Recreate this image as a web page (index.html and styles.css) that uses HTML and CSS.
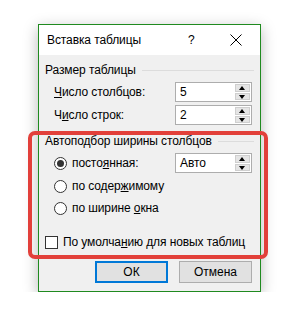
FILE: index.html
```html
<!DOCTYPE html>
<html lang="ru">
<head>
  <meta charset="UTF-8">
  <title>Вставка таблицы</title>
  <link rel="stylesheet" href="styles.css">
</head>
<body>
  <div class="dialog">
    <div class="titlebar">
      <span class="title">Вставка таблицы</span>
      <span class="help">?</span>
      <svg class="close" width="12" height="12" viewBox="0 0 12 12">
        <path d="M0.5 0.5 L11.5 11.5 M11.5 0.5 L0.5 11.5" stroke="#000" stroke-width="1" fill="none"/>
      </svg>
    </div>

    <div class="content">
      <div class="group-title">Размер таблицы</div>

      <div class="row first">
        <span class="label"><u>Ч</u>исло столбцов:</span>
        <div class="spin">
          <span class="value">5</span>
          <div class="arrows"><span class="up"></span><span class="down"></span></div>
        </div>
      </div>
      <div class="row second">
        <span class="label">Ч<u>и</u>сло строк:</span>
        <div class="spin">
          <span class="value">2</span>
          <div class="arrows"><span class="up"></span><span class="down"></span></div>
        </div>
      </div>

      <div class="group-title group2">Автоподбор ширины столбцов</div>

      <div class="row radio-row r1">
        <span class="radio checked"></span>
        <span class="label">посто<u>я</u>нная:</span>
        <div class="spin">
          <span class="value">Авто</span>
          <div class="arrows"><span class="up"></span><span class="down"></span></div>
        </div>
      </div>
      <div class="row radio-row r2">
        <span class="radio"></span>
        <span class="label">по содер<u>ж</u>имому</span>
      </div>
      <div class="row radio-row r3">
        <span class="radio"></span>
        <span class="label">по ширине <u>о</u>кна</span>
      </div>

      <div class="check-row">
        <span class="checkbox"></span>
        <span class="label">По умолча<u>н</u>ию для новых таблиц</span>
      </div>

      <div class="buttons">
        <button class="btn default">ОК</button>
        <button class="btn">Отмена</button>
      </div>
    </div>
  </div>

  <div class="highlight"></div>
</body>
</html>
```

FILE: styles.css
```css
body {
  margin: 0;
  background: #fff;
  font-family: "Liberation Sans", sans-serif;
  font-size: 12px;
  color: #000;
}

.dialog {
  margin: 24px 0 0 38px;
  width: 221px;
  border: 1px solid #1f8a1f;
  background: #f0f0f0;
  box-shadow: 0 4px 14px rgba(0, 0, 0, 0.28);
  white-space: nowrap;
  letter-spacing: -0.1px;
}

.titlebar {
  height: 30px;
  background: #fff;
  display: flex;
  align-items: center;
  padding-left: 8px;
}

.title {
  flex: 1;
  font-size: 12px;
}

.help {
  width: 12px;
  margin-right: 30px;
}

.close {
  margin-right: 18px;
}

.content {
  padding: 0 8px 8px 6px;
}

.group-title {
  display: flex;
  align-items: center;
  height: 16px;
  margin-top: 7px;
  margin-right: -2px;
}

.group-title::after {
  content: "";
  flex: 1;
  height: 1px;
  background: #dcdcdc;
  margin-left: 6px;
}

.group2 {
  margin-top: 8px;
}

.row {
  display: flex;
  align-items: center;
  height: 20px;
  padding-left: 9px;
}

.row.first { margin-top: 4px; }
.row.second { margin-top: 3px; }

.row .label {
  flex: 1;
}

.radio-row {
  height: 22px;
}

.radio-row.r1 { margin-top: 3px; }
.radio-row.r2 { margin-top: 1px; }

.spin {
  width: 75px;
  height: 18px;
  border: 1px solid #adadad;
  background: #fff;
  display: flex;
  align-items: center;
}

.value {
  flex: 1;
  padding-left: 4px;
}

.arrows {
  width: 15px;
  height: 16px;
  margin-right: 1px;
  display: flex;
  flex-direction: column;
  gap: 1px;
  background: #fff;
}

.up, .down {
  flex: 1;
  background: #e5e5e5;
  border: 1px solid #cfcfcf;
  position: relative;
}

.up::after, .down::after {
  content: "";
  position: absolute;
  left: 3px;
  border-left: 3.5px solid transparent;
  border-right: 3.5px solid transparent;
}

.up::after {
  top: 1px;
  border-bottom: 4px solid #000;
}

.down::after {
  top: 1px;
  border-top: 4px solid #000;
}

.radio {
  width: 11px;
  height: 11px;
  border: 1px solid #333;
  border-radius: 50%;
  background: #fff;
  margin-right: 5px;
  display: flex;
  align-items: center;
  justify-content: center;
}

.radio.checked::after {
  content: "";
  width: 7px;
  height: 7px;
  border-radius: 50%;
  background: #333;
}

.check-row {
  display: flex;
  align-items: center;
  height: 16px;
  margin-top: 15px;
}

.checkbox {
  width: 11px;
  height: 11px;
  border: 1px solid #333;
  background: #fff;
  margin-right: 5px;
}

.buttons {
  display: flex;
  justify-content: flex-end;
  gap: 11px;
  margin-top: 11px;
}

.btn {
  width: 73px;
  height: 22px;
  border: 1px solid #adadad;
  background: #e1e1e1;
  font-family: inherit;
  font-size: 12px;
  color: #000;
  padding: 0;
}

.btn.default {
  border: 2px solid #0078d7;
}

.highlight {
  position: absolute;
  left: 28px;
  top: 131px;
  width: 232px;
  height: 120px;
  border: 4px solid #e2403a;
  border-radius: 7px;
}
```
